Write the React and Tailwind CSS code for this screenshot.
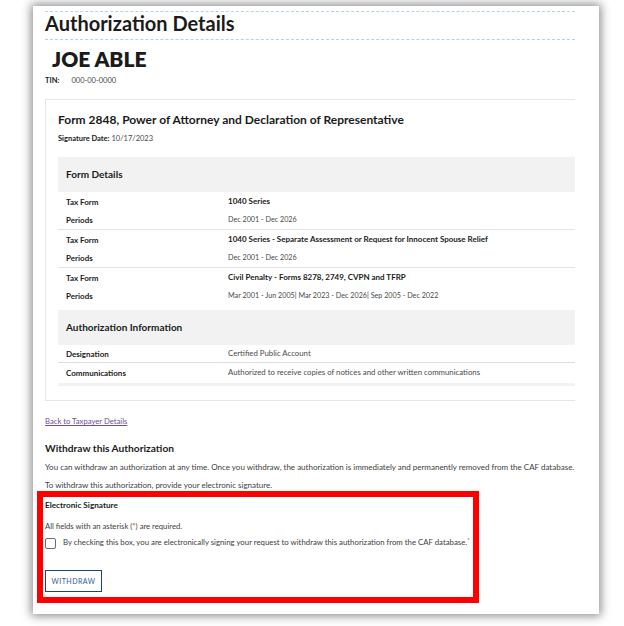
import React from 'react';

const groups = [
  { form: '1040 Series', periods: ['Dec 2001 - Dec 2026'] },
  { form: '1040 Series - Separate Assessment or Request for Innocent Spouse Relief', periods: ['Dec 2001 - Dec 2026'] },
  { form: 'Civil Penalty - Forms 8278, 2749, CVPN and TFRP', periods: ['Mar 2001 - Jun 2005', 'Mar 2023 - Dec 2026', 'Sep 2005 - Dec 2022'] },
];

function Row({ label, children, className = '' }) {
  return (
    <div className={`flex items-center pl-[8px] ${className}`}>
      <span className="w-[162px] shrink-0 text-[8px] font-bold text-[#1b1b1b]">{label}</span>
      <span className="text-[7.8px] text-[#4a4a4a]">{children}</span>
    </div>
  );
}

export default function App() {
  return (
    <div className="min-h-screen bg-white pt-[6px] pl-[33px] font-['Lato',sans-serif] text-[#1b1b1b]">
      <div className="w-[566px] h-[608px] bg-white pt-[5px] pl-[12px] pr-[24px] shadow-[0_0_9px_2px_rgba(0,0,0,0.45)]">
        {/* page title */}
        <div className="border-y border-dashed border-[#b3d1f0] pb-[4px]">
          <h1 className="text-[20px] font-bold leading-[23px]">Authorization Details</h1>
        </div>

        <p className="mt-[6px] pl-[7px] text-[21px] font-extrabold leading-[25px]">JOE ABLE</p>
        <p className="mt-[4px] text-[7.5px] leading-[12px]">
          <span className="font-bold">TIN:</span>
          <span className="ml-[12px] text-[#4a4a4a]">000-00-0000</span>
        </p>

        {/* authorization card */}
        <div className="mt-[12px] border-y border-l border-[#e6e6e6] pl-[12px] pb-[14px]">
          <h2 className="pt-[12px] text-[12px] font-bold leading-[16px]">
            Form 2848, Power of Attorney and Declaration of Representative
          </h2>
          <p className="mt-[5px] text-[7.5px] leading-[12px]">
            <span className="font-bold">Signature Date:</span>{' '}
            <span className="text-[#4a4a4a]">10/17/2023</span>
          </p>

          <div className="mt-[12px] flex h-[35px] items-center bg-[#f2f2f2] pl-[8px] text-[10px] font-bold">
            Form Details
          </div>
          {groups.map((g, i) => (
            <div key={i} className={i < groups.length - 1 ? 'border-b border-[#e4e4e4]' : ''}>
              <Row label="Tax Form" className="h-[19px]">
                <span className="text-[8px] font-bold text-[#1b1b1b]">{g.form}</span>
              </Row>
              <Row label="Periods" className="h-[18px]">
                <span className="text-[7.2px]">
                  {g.periods.map((p, j) => (
                    <React.Fragment key={j}>
                      {j > 0 && <span className="text-[#3b1f4f]">| </span>}
                      {p}
                    </React.Fragment>
                  ))}
                </span>
              </Row>
            </div>
          ))}

          <div className="mt-[5px] flex h-[35px] items-center bg-[#f2f2f2] pl-[8px] text-[10px] font-bold">
            Authorization Information
          </div>
          <Row label="Designation" className="h-[18px] border-b border-[#dcdcdc]">
            Certified Public Account
          </Row>
          <Row label="Communications" className="h-[20px]">
            Authorized to receive copies of notices and other written communications
          </Row>
          <div className="h-[3px] bg-[#f2f2f2]" />
        </div>

        <a href="#" className="mt-[14px] block text-[7.7px] leading-[12px] text-[#6f4e9c] underline">
          Back to Taxpayer Details
        </a>

        <h3 className="mt-[14px] text-[10.2px] font-bold leading-[14px]">Withdraw this Authorization</h3>
        <p className="mt-[6px] text-[8px] leading-[12px] text-[#3d3d3d]">
          You can withdraw an authorization at any time. Once you withdraw, the authorization is immediately and permanently removed from the CAF database.
        </p>
        <p className="mt-[6px] text-[8px] leading-[12px] text-[#3d3d3d]">
          To withdraw this authorization, provide your electronic signature.
        </p>

        {/* highlighted signature area */}
        <div className="-ml-[8px] w-[442px] border-[6px] border-[#ff0000] pl-[2px] pt-[2px] pb-[5px]">
          <p className="text-[8.2px] font-bold leading-[12px]">Electronic Signature</p>
          <p className="mt-[9px] text-[7.7px] leading-[12px] text-[#3d3d3d]">
            All fields with an asterisk (<span className="text-[#d83933]">*</span>) are required.
          </p>
          <label className="mt-[5px] flex h-[12px] items-center gap-[7px]">
            <span className="h-[11px] w-[11px] shrink-0 rounded-[2px] border border-[#6b6b6b] bg-white" />
            <span className="text-[7.8px] text-[#3d3d3d]">
              By checking this box, you are electronically signing your request to withdraw this authorization from the CAF database.
              <sup className="text-[#d83933]">*</sup>
            </span>
          </label>
          <button className="mt-[21px] flex h-[22px] w-[57px] items-center justify-center border border-[#1a4480] text-[7px] tracking-[0.5px] text-[#2e5d9a]">
            WITHDRAW
          </button>
        </div>
      </div>
    </div>
  );
}
